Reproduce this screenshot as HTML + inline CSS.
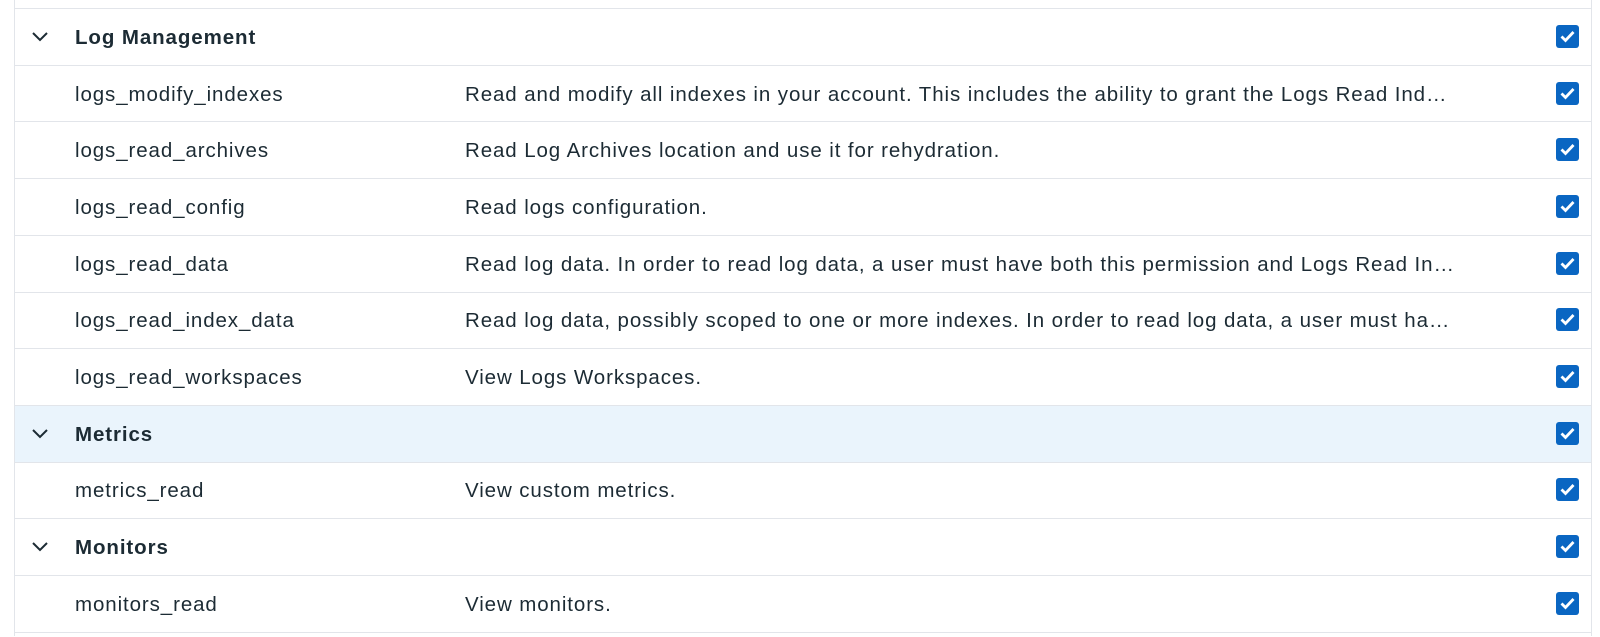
<!DOCTYPE html>
<html><head><style>
html,body{margin:0;padding:0;background:#fff;}
body{width:1600px;height:636px;overflow:hidden;position:relative;font-family:"Liberation Sans",sans-serif;color:#1c2b34;}
.wrap{position:absolute;left:14px;top:0;width:1576px;height:636px;border-left:1.5px solid #e2e5ea;border-right:1.5px solid #e2e5ea;}
.row{position:absolute;left:0;width:1576px;height:56.7px;border-top:1.5px solid #e2e5ea;box-sizing:border-box;font-size:20.5px;letter-spacing:0.9px;}
.row span{position:absolute;top:50%;transform:translateY(-46%);white-space:nowrap;}
.n{left:60px;}
.d{left:450px;}
.g .n{font-weight:bold;letter-spacing:0.9px;}
.hl{background:#eaf4fc;}
.chev{position:absolute;left:16px;top:50%;margin-top:-6px;}
.cb{position:absolute;left:1541px;top:50%;margin-top:-12px;width:23px;height:23px;border-radius:3px;background:#0a66c2;}
</style></head><body>
<div class="wrap"></div>
<div class="wrap" style="border:none;left:15px">
<div class="row g" style="top:8px"><svg class="chev" width="18" height="12" viewBox="0 0 18 12"><path d="M2 2l7 7 7-7" fill="none" stroke="#1c2b34" stroke-width="2"/></svg><span class="n">Log Management</span><div class="cb"><svg width="23" height="23" viewBox="0 0 23 23"><path d="M5.5 11.5l4 4 8-8.5" fill="none" stroke="#fff" stroke-width="2.8"/></svg></div></div>
<div class="row" style="top:64.7px"><span class="n">logs_modify_indexes</span><span class="d">Read and modify all indexes in your account. This includes the ability to grant the Logs Read Ind…</span><div class="cb"><svg width="23" height="23" viewBox="0 0 23 23"><path d="M5.5 11.5l4 4 8-8.5" fill="none" stroke="#fff" stroke-width="2.8"/></svg></div></div>
<div class="row" style="top:121.4px"><span class="n">logs_read_archives</span><span class="d">Read Log Archives location and use it for rehydration.</span><div class="cb"><svg width="23" height="23" viewBox="0 0 23 23"><path d="M5.5 11.5l4 4 8-8.5" fill="none" stroke="#fff" stroke-width="2.8"/></svg></div></div>
<div class="row" style="top:178.1px"><span class="n">logs_read_config</span><span class="d">Read logs configuration.</span><div class="cb"><svg width="23" height="23" viewBox="0 0 23 23"><path d="M5.5 11.5l4 4 8-8.5" fill="none" stroke="#fff" stroke-width="2.8"/></svg></div></div>
<div class="row" style="top:234.8px"><span class="n">logs_read_data</span><span class="d">Read log data. In order to read log data, a user must have both this permission and Logs Read In…</span><div class="cb"><svg width="23" height="23" viewBox="0 0 23 23"><path d="M5.5 11.5l4 4 8-8.5" fill="none" stroke="#fff" stroke-width="2.8"/></svg></div></div>
<div class="row" style="top:291.5px"><span class="n">logs_read_index_data</span><span class="d">Read log data, possibly scoped to one or more indexes. In order to read log data, a user must ha…</span><div class="cb"><svg width="23" height="23" viewBox="0 0 23 23"><path d="M5.5 11.5l4 4 8-8.5" fill="none" stroke="#fff" stroke-width="2.8"/></svg></div></div>
<div class="row" style="top:348.2px"><span class="n">logs_read_workspaces</span><span class="d">View Logs Workspaces.</span><div class="cb"><svg width="23" height="23" viewBox="0 0 23 23"><path d="M5.5 11.5l4 4 8-8.5" fill="none" stroke="#fff" stroke-width="2.8"/></svg></div></div>
<div class="row g hl" style="top:404.9px"><svg class="chev" width="18" height="12" viewBox="0 0 18 12"><path d="M2 2l7 7 7-7" fill="none" stroke="#1c2b34" stroke-width="2"/></svg><span class="n">Metrics</span><div class="cb"><svg width="23" height="23" viewBox="0 0 23 23"><path d="M5.5 11.5l4 4 8-8.5" fill="none" stroke="#fff" stroke-width="2.8"/></svg></div></div>
<div class="row" style="top:461.6px"><span class="n">metrics_read</span><span class="d">View custom metrics.</span><div class="cb"><svg width="23" height="23" viewBox="0 0 23 23"><path d="M5.5 11.5l4 4 8-8.5" fill="none" stroke="#fff" stroke-width="2.8"/></svg></div></div>
<div class="row g" style="top:518.3px"><svg class="chev" width="18" height="12" viewBox="0 0 18 12"><path d="M2 2l7 7 7-7" fill="none" stroke="#1c2b34" stroke-width="2"/></svg><span class="n">Monitors</span><div class="cb"><svg width="23" height="23" viewBox="0 0 23 23"><path d="M5.5 11.5l4 4 8-8.5" fill="none" stroke="#fff" stroke-width="2.8"/></svg></div></div>
<div class="row" style="top:575px"><span class="n">monitors_read</span><span class="d">View monitors.</span><div class="cb"><svg width="23" height="23" viewBox="0 0 23 23"><path d="M5.5 11.5l4 4 8-8.5" fill="none" stroke="#fff" stroke-width="2.8"/></svg></div></div>
<div class="row" style="top:631.7px;height:5px"></div>
</div>
</body></html>
